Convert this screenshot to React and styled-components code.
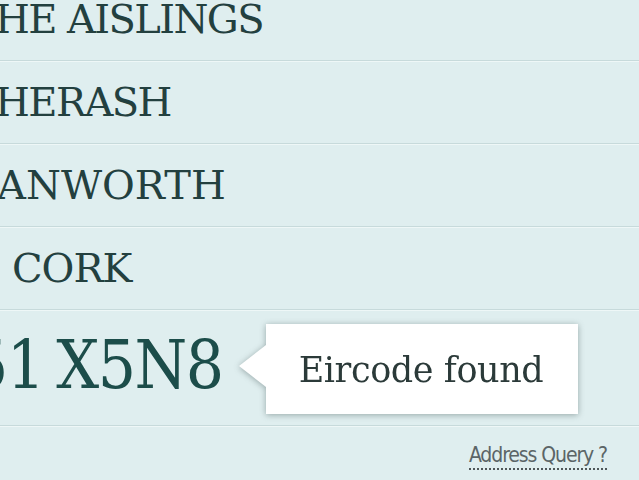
import React from "react";
import styled, { createGlobalStyle } from "styled-components";

const Global = createGlobalStyle`
  html, body {
    margin: 0;
    padding: 0;
    background: #dfeeef;
    overflow: hidden;
  }
  body {
    font-family: "DejaVu Serif", "Liberation Serif", serif;
  }
`;

const Page = styled.div`
  width: 639px;
  height: 480px;
  overflow: hidden;
  background: #dfeeef;
`;

const List = styled.div`
  display: flex;
  flex-direction: column;
  margin-top: -22px;
`;

const Row = styled.div`
  display: flex;
  align-items: center;
  height: ${(p) => p.$height}px;
  border-bottom: 1px solid #c7dadb;
  box-shadow: 0 1px 0 #eef7f7;
`;

const Line = styled.span`
  font-family: "DejaVu Serif", "Liberation Serif", serif;
  font-size: 40px;
  line-height: 1;
  color: #23403f;
  white-space: nowrap;
  letter-spacing: ${(p) => p.$spacing}px;
  margin-left: ${(p) => p.$indent}px;
`;

const Code = styled.span`
  font-family: "DejaVu Serif Condensed", "DejaVu Serif", serif;
  font-stretch: condensed;
  font-size: 67px;
  line-height: 1;
  color: #1c4d4a;
  white-space: nowrap;
  letter-spacing: -1.5px;
  word-spacing: -5px;
  margin-left: ${(p) => p.$indent}px;
  margin-top: -4px;
`;

/* callout box with its left-pointing arrow, shadow drawn around both */
const Bubble = styled.div`
  position: relative;
  margin-left: 43px;
  margin-top: 2px;
  width: 312px;
  height: 90px;
  box-sizing: border-box;
  display: flex;
  align-items: center;
  padding-left: 33px;
  background: #ffffff;
  filter: drop-shadow(0 1px 3px rgba(40, 60, 60, 0.4));

  &::before {
    content: "";
    position: absolute;
    left: -27px;
    top: 21px;
    width: 0;
    height: 0;
    border-top: 21px solid transparent;
    border-bottom: 21px solid transparent;
    border-right: 27px solid #ffffff;
  }
`;

const BubbleText = styled.span`
  position: relative;
  font-family: "DejaVu Serif", "Liberation Serif", serif;
  font-size: 35px;
  color: #2b3a39;
  letter-spacing: -0.4px;
  white-space: nowrap;
  margin-top: 2px;
`;

const Footer = styled.div`
  display: flex;
  justify-content: flex-end;
  padding: 17px 32px 0 0;
`;

const QueryLink = styled.a`
  font-family: "DejaVu Sans Condensed", "DejaVu Sans", sans-serif;
  font-stretch: condensed;
  font-size: 21px;
  line-height: 24px;
  padding-bottom: 1px;
  color: #5b6567;
  text-decoration: none;
  border-bottom: 2px dotted #4f5759;
  letter-spacing: -1.1px;
  cursor: help;
`;

const rows = [
  { text: "HE AISLINGS", indent: -5, spacing: -1.6 },
  { text: "HERASH", indent: -5, spacing: -1.6 },
  { text: "ANWORTH", indent: -3, spacing: 0 },
  { text: "CORK", indent: 12, spacing: -1 },
];

export default function App() {
  return (
    <Page>
      <Global />
      <List>
        {rows.map((r) => (
          <Row key={r.text} $height={82}>
            <Line $indent={r.indent} $spacing={r.spacing}>
              {r.text}
            </Line>
          </Row>
        ))}
        <Row $height={115}>
          <Code $indent={-30}>51 X5N8</Code>
          <Bubble>
            <BubbleText>Eircode found</BubbleText>
          </Bubble>
        </Row>
      </List>
      <Footer>
        <QueryLink href="#" title="Address Query">
          Address Query ?
        </QueryLink>
      </Footer>
    </Page>
  );
}
